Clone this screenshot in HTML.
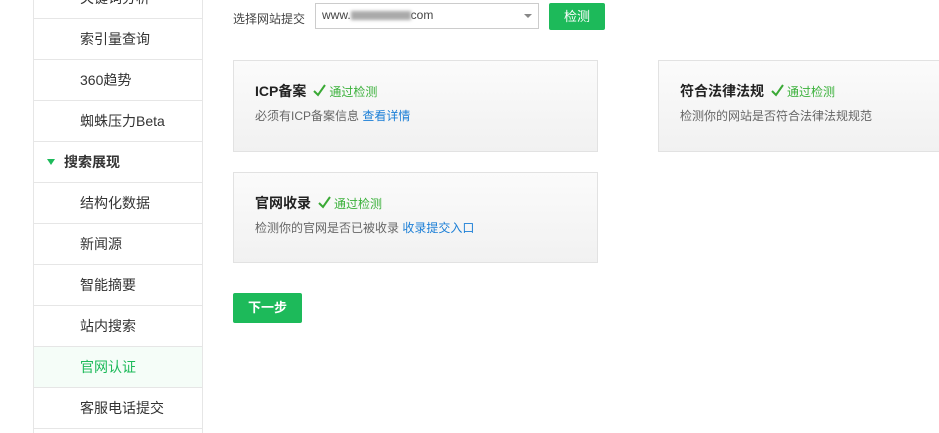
<!DOCTYPE html>
<html><head><meta charset="utf-8"><style>
*{margin:0;padding:0;box-sizing:border-box}
html,body{width:939px;height:433px;overflow:hidden}
body{background:#fff;font-family:"Liberation Sans","Noto Sans CJK SC",sans-serif;font-size:13px;color:#333;position:relative}
.side{position:absolute;left:33px;top:-22px;width:170px;height:455px;overflow:hidden;border-left:1px solid #e6e6e6;border-right:1px solid #e6e6e6}
.side div{height:41px;line-height:40px;border-bottom:1px solid #e6e6e6;padding-left:46px;font-size:14px;color:#333}
.side .b{font-weight:bold;padding-left:30px;position:relative}
.side .b:before{content:"";position:absolute;left:13px;top:17px;border-left:4px solid transparent;border-right:4px solid transparent;border-top:6px solid #1dba5a}
.side .a{background:#f5fdf8;color:#1dba5a}
.abs{position:absolute}
.card{position:absolute;border:1px solid #e2e2e2;background:linear-gradient(#fbfbfb,#f1f1f1)}
.card h3{position:absolute;left:21px;top:20px;font-size:14px;font-weight:bold;color:#222;white-space:nowrap}
.card h3 span{font-weight:normal;font-size:12px;color:#3bb13b;margin-left:3px}
.card h3 svg{margin-left:7px;vertical-align:-1px}
.card p{position:absolute;left:21px;top:46px;font-size:12px;color:#666}
.card p a{color:#1a7ed6}
</style></head><body>
<div class="side">
<div>关键词分析</div><div>索引量查询</div><div>360趋势</div><div>蜘蛛压力Beta</div><div class="b">搜索展现</div><div>结构化数据</div><div>新闻源</div><div>智能摘要</div><div>站内搜索</div><div class="a">官网认证</div><div>客服电话提交</div>
</div>
<div class="abs" style="left:233px;top:10px;font-size:12px;color:#444">选择网站提交</div>
<div class="abs" style="left:315px;top:3px;width:224px;height:26px;border:1px solid #ccc;font-size:12px;color:#444;padding:4px 6px">www.<span style="display:inline-block;width:60px;height:9px;background:#aaa;filter:blur(1.5px);vertical-align:middle"></span>com<span style="position:absolute;right:6px;top:10px;border-left:4px solid transparent;border-right:4px solid transparent;border-top:4px solid #888"></span></div>
<div class="abs" style="left:549px;top:3px;width:56px;height:27px;background:#1dba5a;border-radius:2px;color:#fff;text-align:center;line-height:27px;font-size:13px">检测</div>
<div class="card" style="left:233px;top:60px;width:365px;height:92px"><h3>ICP备案<svg width="13" height="13" viewBox="0 0 13 13"><path d="M1 7 L5 11 L12 1" fill="none" stroke="#3aa935" stroke-width="2"/></svg><span>通过检测</span></h3><p>必须有ICP备案信息 <a>查看详情</a></p></div>
<div class="card" style="left:658px;top:60px;width:300px;height:92px"><h3>符合法律法规<svg width="13" height="13" viewBox="0 0 13 13"><path d="M1 7 L5 11 L12 1" fill="none" stroke="#3aa935" stroke-width="2"/></svg><span>通过检测</span></h3><p>检测你的网站是否符合法律法规规范</p></div>
<div class="card" style="left:233px;top:172px;width:365px;height:91px"><h3>官网收录<svg width="13" height="13" viewBox="0 0 13 13"><path d="M1 7 L5 11 L12 1" fill="none" stroke="#3aa935" stroke-width="2"/></svg><span>通过检测</span></h3><p>检测你的官网是否已被收录 <a>收录提交入口</a></p></div>
<div class="abs" style="left:233px;top:293px;width:69px;height:30px;background:#1dba5a;border-radius:2px;color:#fff;text-align:center;line-height:30px;font-size:13px;font-weight:bold">下一步</div>
</body></html>
